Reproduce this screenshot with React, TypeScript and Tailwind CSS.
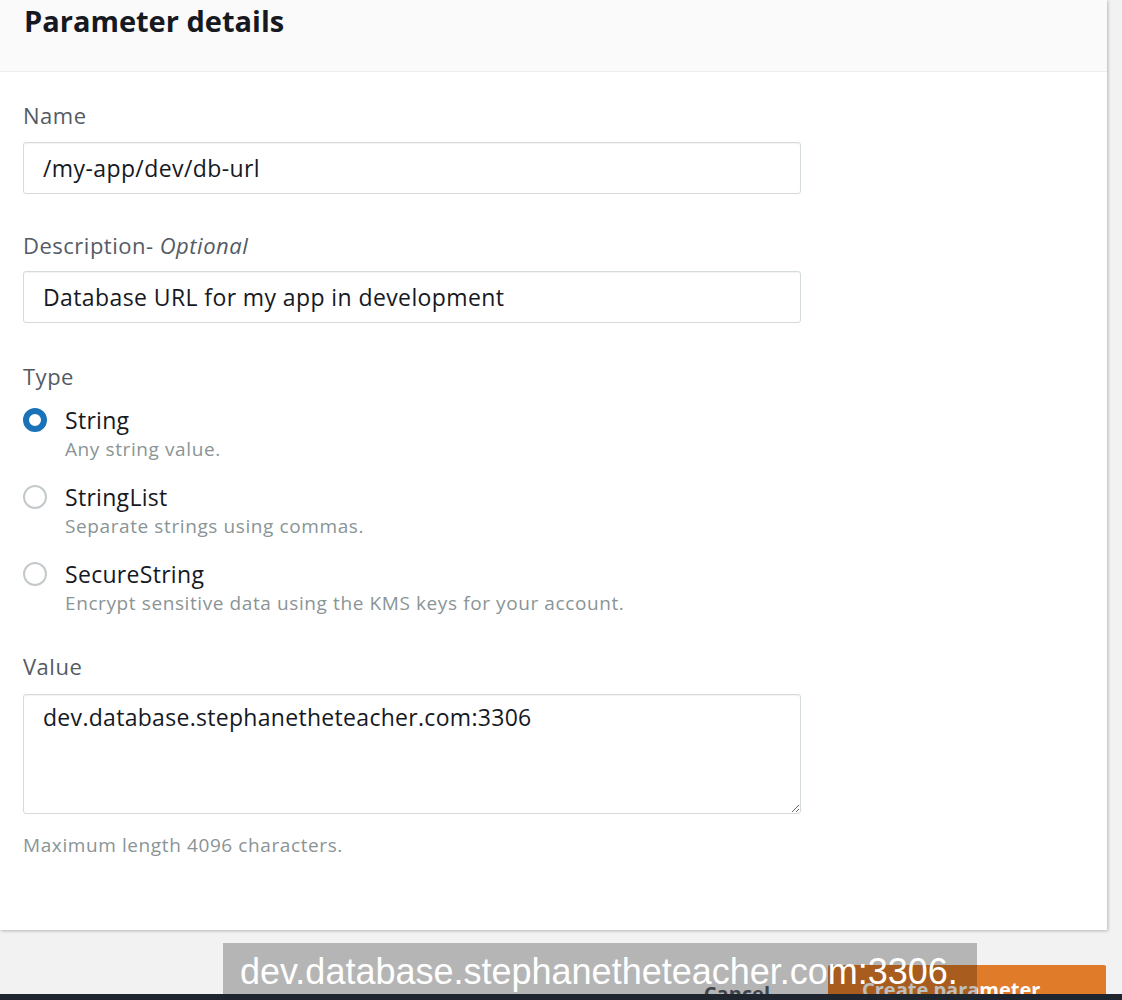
import React from "react";

const font = { fontFamily: '"Open Sans", "Liberation Sans", sans-serif' };

function Radio({ checked }: { checked?: boolean }) {
  return checked ? (
    <div className="w-[24px] h-[24px] rounded-full border-[6px] border-[#1a73b8] bg-white shrink-0" />
  ) : (
    <div className="w-[24px] h-[24px] rounded-full border-2 border-[#c4c9cc] bg-white shrink-0" />
  );
}

function Option({ checked, title, desc }: { checked?: boolean; title: string; desc: string }) {
  return (
    <div className="flex gap-[18px]">
      <div className="pt-[1px]">
        <Radio checked={checked} />
      </div>
      <div className="flex flex-col">
        <div className="text-[23px] leading-[26px] tracking-[0.3px] text-[#16191f]">{title}</div>
        <div className="text-[19px] leading-[22px] tracking-[0.6px] text-[#8a9496] mt-[5px]">{desc}</div>
      </div>
    </div>
  );
}

export default function App() {
  return (
    <div
      className="relative w-[1122px] h-[1000px] bg-[#f2f2f2] overflow-hidden flex flex-col"
      style={font}
    >
      <div className="w-[1107px] h-[930px] bg-white shadow-[1px_1px_3px_rgba(0,0,0,0.25)] flex flex-col shrink-0">
        <div className="h-[72px] bg-[#fafafa] border-b border-[#eeeeee] pl-[24px] pt-[1px]">
          <h1 className="text-[29px] leading-[40px] font-bold text-[#16191f] tracking-[0px]">
            Parameter details
          </h1>
        </div>
        <div className="pl-[23px] flex flex-col">
          <div className="mt-[30px] text-[22px] leading-[26px] tracking-[0.5px] text-[#545b64]">Name</div>
          <div className="mt-[14px] w-[778px] h-[52px] border border-[#d5dbdb] rounded-[3px] shadow-[inset_0_1px_1px_rgba(0,0,0,0.05)] flex items-center pl-[19px] text-[23px] tracking-[0.4px] text-[#16191f]">
            /my-app/dev/db-url
          </div>
          <div className="mt-[38px] text-[22px] leading-[26px] tracking-[0.5px] text-[#545b64]">
            Description- <span className="italic">Optional</span>
          </div>
          <div className="mt-[13px] w-[778px] h-[52px] border border-[#d5dbdb] rounded-[3px] shadow-[inset_0_1px_1px_rgba(0,0,0,0.05)] flex items-center pl-[19px] text-[23px] tracking-[0.4px] text-[#16191f]">
            Database URL for my app in development
          </div>
          <div className="mt-[40px] text-[22px] leading-[26px] tracking-[0.5px] text-[#545b64]">Type</div>
          <div className="mt-[18px] flex flex-col gap-[24px]">
            <Option checked title="String" desc="Any string value." />
            <Option title="StringList" desc="Separate strings using commas." />
            <Option title="SecureString" desc="Encrypt sensitive data using the KMS keys for your account." />
          </div>
          <div className="mt-[39px] text-[22px] leading-[26px] tracking-[0.5px] text-[#545b64]">Value</div>
          <textarea
            readOnly
            defaultValue="dev.database.stephanetheteacher.com:3306"
            className="mt-[15px] w-[778px] h-[120px] border border-[#d5dbdb] rounded-[3px] shadow-[inset_0_1px_1px_rgba(0,0,0,0.05)] pl-[19px] pt-[8px] text-[23px] leading-[28px] tracking-[0.3px] text-[#16191f] outline-none resize-y"
            style={font}
          />
          <div className="mt-[20px] text-[19px] leading-[22px] tracking-[0.6px] text-[#8a9496]">
            Maximum length 4096 characters.
          </div>
        </div>
      </div>

      <div className="flex justify-end items-start pr-[16px] pt-[35px] gap-[58px]">
        <div className="pt-[14px] text-[20px] font-bold text-[#545b64]">Cancel</div>
        <div className="w-[278px] h-[50px] bg-[#e07b29] rounded-[2px] pl-[34px] pt-[10px] text-[20px] font-bold text-white">
          Create parameter
        </div>
      </div>

      <div className="absolute left-[223px] top-[943px] w-[754px] h-[57px] bg-black/25 pl-[17px]">
        <div
          className="text-white text-[36px] leading-[57px]"
          style={{ fontFamily: '"Liberation Sans", Arial, sans-serif' }}
        >
          dev.database.stephanetheteacher.com:3306.
        </div>
      </div>

      <div className="absolute left-0 bottom-0 w-full h-[6px] bg-[#1e252e]" />
    </div>
  );
}
